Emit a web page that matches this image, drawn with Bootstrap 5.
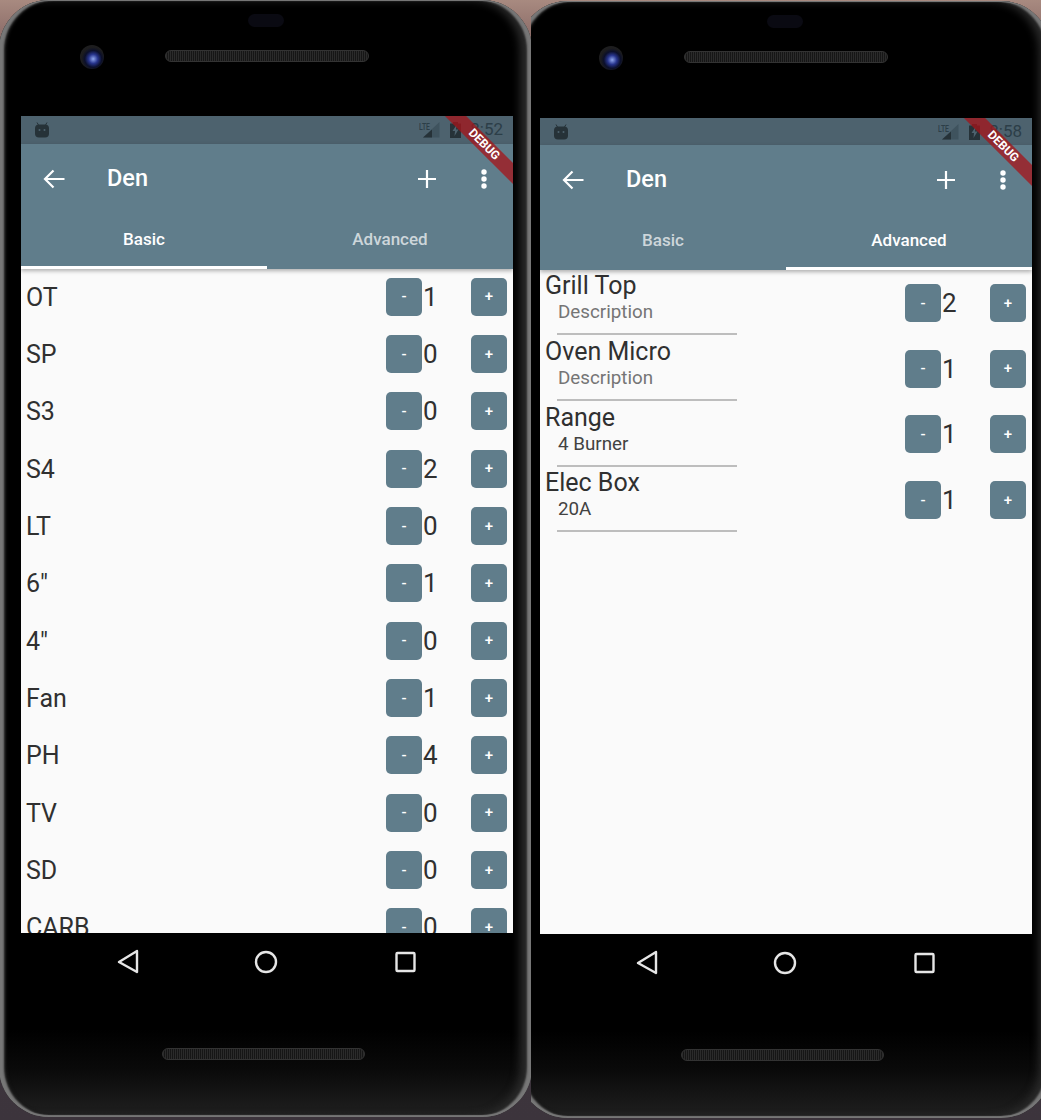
<!DOCTYPE html>
<html lang="en">
<head>
    <title>Den</title>
    <meta name="viewport" content="width=device-width, initial-scale=1">
    <link href="https://cdn.jsdelivr.net/npm/bootstrap@5.3.0/dist/css/bootstrap.min.css" rel="stylesheet">
    <script src="https://cdn.jsdelivr.net/npm/bootstrap@5.3.0/dist/js/bootstrap.bundle.min.js"></script>

    <style>
        body {
            width: 1041px;
            height: 1120px;
            overflow: hidden;
            background: linear-gradient(#a88a80, #7a5a5a 60px, #4a3c44 300px, #3c343c);
            font-family: Roboto, "Liberation Sans", sans-serif;
        }
        .shot { height: 1120px; flex: none; }
        .shot-a { width: 531px; }
        .shot-b { width: 510px; }
        .phone {
            width: 533px;
            height: 1117px;
            margin-left: -1px;
            padding: 0 19px 0 22px;
            border-radius: 50px;
            background: linear-gradient(#000 0, #000 1030px, #0a0a0a 1070px, #202020 100%);
            box-shadow: inset 5px 0 2px #777, inset -5px 0 2px #777, inset 0 1px 0 #777, inset 0 -2px 1px #777,
                inset 7px 0 3px #1c1c1c, inset -12px 0 8px #2a2a2a;
        }
        .shot-b .phone { margin-left: -13px; margin-top: 1px; }
        .phone-top { height: 116px; flex: none; }
        .shot-b .phone-top { height: 117px; }
        .pill { left: 227px; top: 14px; width: 36px; height: 13px; border-radius: 7px; background: #0a0a12; }
        .cam {
            left: 59px; top: 45px; width: 24px; height: 24px; border-radius: 50%;
            background: radial-gradient(circle at 55% 58%, #8fa6ee 0, #27348c 24%, #0b0f2a 44%, #1c1c1e 60%, #222 100%);
        }
        .grille {
            height: 12px; width: 204px; border-radius: 6px; border: 1px solid #333;
            background: repeating-linear-gradient(90deg, #2b2b2b 0 1px, #161616 1px 2px);
        }
        .grille-top { left: 144px; top: 50px; }
        .grille-bottom { left: 163px; top: 1048px; width: 203px; }
        .screen { height: 817px; flex: none; background: #fafafa; color: #303030; }
        .shot-b .screen { height: 816px; }
        .status-bar { height: 28px; flex: none; background: #4d626e; color: #2c3e48; font-size: 17px; padding: 0 10px 0 14px; }
        .shot-b .status-bar { height: 27px; }
        .app-head { background: #607d8b; color: #fff; box-shadow: 0 2px 4px rgba(0, 0, 0, .3); z-index: 1; flex: none; }
        .tool-bar { height: 69px; }
        .back-slot { width: 86px; padding-left: 22px; }
        .head-title { font-size: 23.5px; font-weight: 500; }
        .add-slot { margin-right: 42px; }
        .more-slot { margin-right: 24px; }
        .tab-strip { height: 56px; }
        .tab-item {
            width: 246px; line-height: 53px; text-align: center; font-size: 17px; font-weight: 500;
            color: rgba(255, 255, 255, .7); border-bottom: 3px solid transparent; height: 56px;
        }
        .tab-item.on { color: #fff; border-bottom-color: #fff; }
        .basic-list { margin-top: -1px; }
        .qty-row { height: 57.33px; flex: none; padding: 0 6px 0 5px; }
        .item-name { font-size: 25px; line-height: 28px; }
        .qty-row .item-name { padding-top: 2px; }
        .qty-btn {
            width: 36px; height: 38px; padding: 0; border: 0; border-radius: 5px;
            background: #607d8b; color: #fff; font-size: 15px; font-weight: 500; flex: none;
        }
        .qty-val { width: 49px; padding-left: 1px; font-size: 26px; line-height: 38px; flex: none; }
        .adv-list { padding-top: 2px; }
        .adv-row { height: 65.8px; flex: none; padding: 0 6px 4px 5px; }
        .item-sub { font-size: 18.8px; line-height: 22px; padding-left: 13px; margin-top: 1px; color: #424242; }
        .item-sub.muted-sub { color: #757575; }
        .item-rule { margin: 10px 0 0 12px; width: 180px; height: 2px; background: #bdbdbd; }
        .ribbon {
            left: 403px; top: 21px; width: 120px; height: 15px; line-height: 14px; text-align: center;
            transform: rotate(45deg); background: rgba(165, 20, 25, .75); color: #fff;
            font-size: 12px; font-weight: 700; z-index: 2;
        }
        .batt-icon { margin: 0 9px 0 10px; }
        .phone-nav { height: 56px; flex: none; }
    </style>
</head>
<body class="d-flex">

<div class="shot shot-a overflow-hidden">
    <div class="phone d-flex flex-column position-relative" id="phoneA"></div>
</div>
<div class="shot shot-b overflow-hidden">
    <div class="phone d-flex flex-column position-relative" id="phoneB"></div>
</div>

<script>
    const basicItems = [["OT", 1], ["SP", 0], ["S3", 0], ["S4", 2], ["LT", 0], ['6"', 1], ['4"', 0], ["Fan", 1], ["PH", 4], ["TV", 0], ["SD", 0], ["CARB", 0]];
    const advancedItems = [
        ["Grill Top", "Description", 2, true],
        ["Oven Micro", "Description", 1, true],
        ["Range", "4 Burner", 1, false],
        ["Elec Box", "20A", 1, false]
    ];

    function qtyControls(val) {
        return `<button type="button" class="btn qty-btn">-</button><span class="qty-val">${val}</span><button type="button" class="btn qty-btn">+</button>`;
    }

    function basicList() {
        return `<div class="basic-list">` + basicItems.map(i => `<div class="qty-row d-flex align-items-center">
            <span class="item-name flex-grow-1">${i[0]}</span>${qtyControls(i[1])}</div>`).join("") + `</div>`;
    }

    function advancedList() {
        return `<div class="adv-list">` + advancedItems.map(i => `<div class="adv-row d-flex align-items-center">
            <div class="flex-grow-1 align-self-start">
                <div class="item-name">${i[0]}</div>
                <div class="item-sub ${i[3] ? "muted-sub" : ""}">${i[1]}</div>
                <div class="item-rule"></div>
            </div>${qtyControls(i[2])}</div>`).join("") + `</div>`;
    }

    function phone(time, activeTab, list) {
        return `
        <div class="phone-top position-relative">
            <div class="pill position-absolute"></div>
            <div class="cam position-absolute"></div>
            <div class="grille grille-top position-absolute"></div>
        </div>
        <div class="screen d-flex flex-column position-relative overflow-hidden">
            <div class="ribbon position-absolute">DEBUG</div>
            <div class="status-bar d-flex align-items-center">
                <svg width="14" height="16" viewBox="0 0 14 16" class="me-auto">
                    <path d="M2 0.5 L3.5 3 M12 0.5 L10.5 3" stroke="#263238" stroke-width="1"/>
                    <rect x="0" y="2.5" width="14" height="13" rx="4" fill="#263238"/>
                    <circle cx="4.5" cy="8" r="1" fill="#4d626e"/><circle cx="9.5" cy="8" r="1" fill="#4d626e"/>
                </svg>
                <svg width="21" height="16" viewBox="0 0 21 16">
                    <text x="0" y="7.5" font-size="8.5" font-family="Roboto" font-weight="500" textLength="11" lengthAdjust="spacingAndGlyphs" fill="#2c3e48">LTE</text>
                    <path d="M20.5 0 V15.5 H4 Z" fill="#3f535e"/>
                    <path d="M13 7.5 V15.5 H4 Z" fill="#263238"/>
                </svg>
                <svg width="11" height="16" viewBox="0 0 11 16" class="batt-icon">
                    <path d="M3 0 H8 V1.5 H11 V16 H0 V1.5 H3 Z" fill="#263238"/>
                    <path d="M6.5 3 L2.5 9 H5 L4.5 14 L8.5 7.5 H6 Z" fill="#4d626e"/>
                </svg>
                <span>${time}</span>
            </div>
            <div class="app-head position-relative">
                <div class="tool-bar d-flex align-items-center">
                    <div class="back-slot">
                        <svg width="22" height="20" viewBox="0 0 22 20" class="d-block"><path d="M21.5 10 H2.5 M10.5 1.5 L2 10 L10.5 18.5" fill="none" stroke="#fff" stroke-width="2.2"/></svg>
                    </div>
                    <span class="head-title me-auto">Den</span>
                    <svg width="20" height="20" viewBox="0 0 20 20" class="add-slot"><path d="M10 1 V19 M1 10 H19" stroke="#fff" stroke-width="2.2"/></svg>
                    <svg width="10" height="20" viewBox="0 0 10 20" class="more-slot"><circle cx="5" cy="3" r="2.7" fill="#fff"/><circle cx="5" cy="10" r="2.7" fill="#fff"/><circle cx="5" cy="17" r="2.7" fill="#fff"/></svg>
                </div>
                <div class="tab-strip nav flex-nowrap">
                    <div class="tab-item ${activeTab === 0 ? "on" : ""}">Basic</div>
                    <div class="tab-item ${activeTab === 1 ? "on" : ""}">Advanced</div>
                </div>
            </div>
            ${list}
        </div>
        <div class="phone-nav position-relative">
            <svg width="492" height="56" viewBox="0 0 492 56" class="d-block">
                <path d="M116 18 L98 29 L116 39 Z" fill="none" stroke="#e6e6e6" stroke-width="2.4" stroke-linejoin="round"/>
                <circle cx="245" cy="29" r="10" fill="none" stroke="#e6e6e6" stroke-width="2.4"/>
                <rect x="375.5" y="20" width="18" height="18" rx="1" fill="none" stroke="#e6e6e6" stroke-width="2.4"/>
            </svg>
        </div>
        <div class="grille grille-bottom position-absolute"></div>`;
    }

    document.getElementById("phoneA").innerHTML = phone("8:52", 0, basicList());
    document.getElementById("phoneB").innerHTML = phone("8:58", 1, advancedList());
</script>

</body>
</html>
